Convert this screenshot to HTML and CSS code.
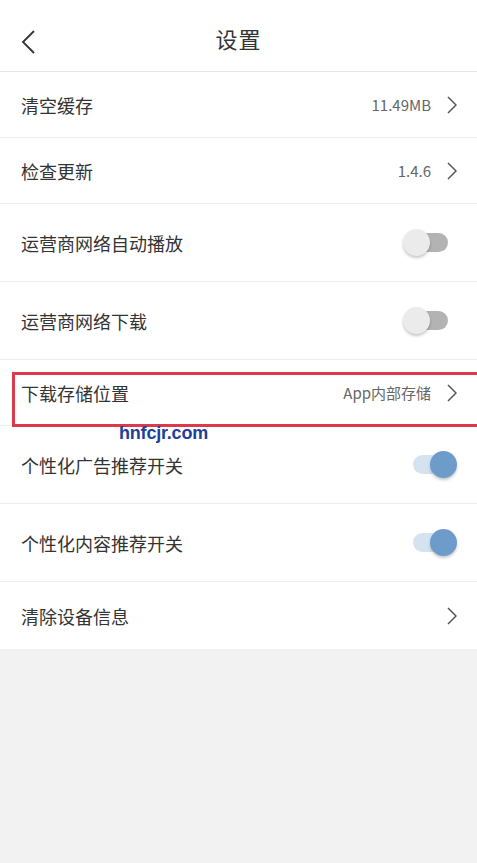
FILE: index.html
```html
<!DOCTYPE html>
<html lang="zh-CN">
<head>
    <meta charset="UTF-8">
    <meta name="viewport" content="width=device-width, initial-scale=1.0">
    <title>设置</title>
    <link rel="stylesheet" href="styles.css">
</head>
<body>

    <!-- Header -->
    <header class="topbar">
        <svg class="back" width="16" height="26" viewBox="0 0 16 26">
            <path d="M14 2 L3 13 L14 24" fill="none" stroke="#333" stroke-width="1.8"/>
        </svg>
        <h1 class="title">设置</h1>
    </header>

    <!-- Settings list -->
    <ul class="list">
        <li class="row short">
            <span class="label">清空缓存</span>
            <span class="value">11.49MB</span>
            <svg class="arrow" width="10" height="18" viewBox="0 0 10 18"><path d="M1 1 L9 9 L1 17" fill="none" stroke="#555" stroke-width="1.5"/></svg>
        </li>
        <li class="row short">
            <span class="label">检查更新</span>
            <span class="value">1.4.6</span>
            <svg class="arrow" width="10" height="18" viewBox="0 0 10 18"><path d="M1 1 L9 9 L1 17" fill="none" stroke="#555" stroke-width="1.5"/></svg>
        </li>
        <li class="row tall">
            <span class="label">运营商网络自动播放</span>
            <span class="switch"><span class="knob"></span></span>
        </li>
        <li class="row tall">
            <span class="label">运营商网络下载</span>
            <span class="switch"><span class="knob"></span></span>
        </li>
        <li class="row short marked">
            <span class="label">下载存储位置</span>
            <span class="value">App内部存储</span>
            <svg class="arrow" width="10" height="18" viewBox="0 0 10 18"><path d="M1 1 L9 9 L1 17" fill="none" stroke="#555" stroke-width="1.5"/></svg>
            <span class="highlight"></span>
        </li>
        <li class="row tall">
            <span class="label">个性化广告推荐开关</span>
            <span class="switch on"><span class="knob"></span></span>
            <span class="watermark">hnfcjr.com</span>
        </li>
        <li class="row tall">
            <span class="label">个性化内容推荐开关</span>
            <span class="switch on"><span class="knob"></span></span>
        </li>
        <li class="row short last">
            <span class="label">清除设备信息</span>
            <svg class="arrow" width="10" height="18" viewBox="0 0 10 18"><path d="M1 1 L9 9 L1 17" fill="none" stroke="#555" stroke-width="1.5"/></svg>
        </li>
    </ul>

</body>
</html>
```

FILE: styles.css
```css
/* General Styles */
body, html {
    margin: 0;
    padding: 0;
    height: 100%;
    background: #f2f2f2;
    font-family: "Noto Sans CJK SC", "Noto Sans", sans-serif;
    color: #333;
}

/* Header */
.topbar {
    position: relative;
    box-sizing: border-box;
    height: 72px;
    padding-top: 5px;
    background: #fff;
    border-bottom: 1px solid #e6e6e6;
    display: flex;
    align-items: center;
    justify-content: center;
}

.back {
    position: absolute;
    left: 20px;
    top: 29px;
}

.title {
    margin: 0;
    font-size: 22px;
    font-weight: normal;
    color: #333;
    letter-spacing: 1px;
}

/* List */
.list {
    list-style: none;
    margin: 0;
    padding: 0;
    background: #fff;
}

.row {
    position: relative;
    display: flex;
    align-items: center;
    padding: 0 20px 0 21px;
    border-bottom: 1px solid #ededed;
}

.row.short {
    height: 65px;
}

.row.tall {
    height: 77px;
}

.row.last {
    height: 67px;
    border-bottom: none;
}

.label {
    flex: 1;
    font-size: 18px;
    color: #333;
}

.value {
    font-size: 15px;
    color: #666;
    margin-right: 16px;
}

.arrow {
    display: block;
}

/* Switches */
.switch {
    position: relative;
    width: 30px;
    height: 19px;
    border-radius: 10px;
    background: #b3b3b3;
    margin-right: 9px;
}

.knob {
    position: absolute;
    top: -4px;
    left: -15px;
    width: 27px;
    height: 27px;
    border-radius: 50%;
    background: #ebebeb;
    box-shadow: 0 2px 3px rgba(0, 0, 0, 0.22);
}

.switch.on {
    background: #d5e3f1;
    margin-right: 14px;
}

.switch.on .knob {
    left: 17px;
    background: #6e9cca;
}

/* Red marking box over the storage row */
.highlight {
    position: absolute;
    left: 12px;
    right: -4px;
    top: 12px;
    bottom: -2px;
    border: 3px solid #dc3a4b;
}

.watermark {
    position: absolute;
    left: 119px;
    top: -3px;
    font-family: "Liberation Sans", Arial, sans-serif;
    font-size: 18px;
    font-weight: bold;
    color: #1e3f9c;
    letter-spacing: -0.2px;
}
```
